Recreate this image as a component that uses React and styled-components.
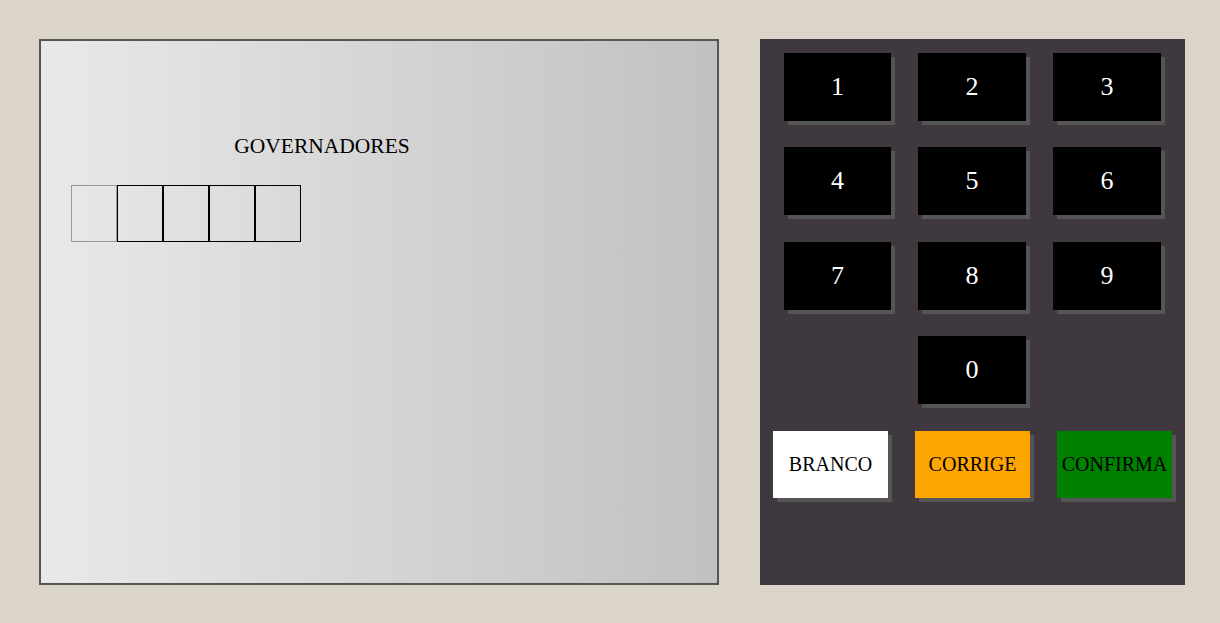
import React from 'react'
import styled, { createGlobalStyle } from 'styled-components'

const GlobalStyle = createGlobalStyle`
  html, body {
    margin: 0;
    padding: 0;
    background-color: #dbd4c9;
    font-family: "Liberation Serif", "Times New Roman", serif;
  }
`;

const Page = styled.div`
  display: flex;
  gap: 41px;
  padding: 39px 0 0 39px;
  height: 623px;
  box-sizing: border-box;
`;

const Screen = styled.div`
  width: 680px;
  height: 546px;
  box-sizing: border-box;
  border: 2px solid #555;
  background: linear-gradient(to right, #e9e9e9, #c1c1c1);
  padding: 0 0 0 30px;
`;

const Info = styled.div`
  width: 502px;
  display: flex;
  flex-direction: column;
`;

const Title = styled.div`
  margin-top: 93px;
  text-align: center;
  font-size: 21.5px;
  line-height: 24px;
  color: #000;
`;

const Digits = styled.div`
  display: flex;
  margin-top: 27px;
`;

const DigitBox = styled.div`
  width: 46px;
  height: 57px;
  box-sizing: border-box;
  border: 1px solid ${p => (p.$active ? '#999' : '#000')};
`;

const Keypad = styled.div`
  width: 425px;
  height: 546px;
  box-sizing: border-box;
  background-color: #3f393f;
  padding-top: 14px;
`;

const NumberGrid = styled.div`
  display: grid;
  grid-template-columns: 107px 108px 108px;
  grid-auto-rows: 68px;
  column-gap: 27px;
  row-gap: 26.33px;
  margin-left: 24px;
`;

const Key = styled.button`
  border: none;
  border-radius: 0;
  margin: 0;
  padding: 0;
  background-color: #000;
  color: #fff;
  font-family: "Liberation Serif", "Times New Roman", serif;
  font-size: 26px;
  box-shadow: 4px 4px 0 #555;
  grid-column: ${p => p.$col || 'auto'};
  cursor: pointer;
`;

const ActionRow = styled.div`
  display: flex;
  gap: 27px;
  padding: 0 13px;
  margin-top: 27px;
`;

const Action = styled.button`
  width: 115px;
  height: 67px;
  border: none;
  border-radius: 0;
  margin: 0;
  padding: 0;
  background-color: ${p => p.$bg};
  color: #000;
  font-family: "Liberation Serif", "Times New Roman", serif;
  font-size: 20px;
  box-shadow: 4px 4px 0 #555;
  cursor: pointer;
`;

const numbers = ['1', '2', '3', '4', '5', '6', '7', '8', '9'];

export default function App() {
  return (
    <>
      <GlobalStyle />
      <Page>
        <Screen>
          <Info>
            <Title>GOVERNADORES</Title>
            <Digits>
              {[0, 1, 2, 3, 4].map(i => (
                <DigitBox key={i} $active={i === 0} />
              ))}
            </Digits>
          </Info>
        </Screen>
        <Keypad>
          <NumberGrid>
            {numbers.map(n => (
              <Key key={n}>{n}</Key>
            ))}
            <Key $col="2">0</Key>
          </NumberGrid>
          <ActionRow>
            <Action $bg="#ffffff">BRANCO</Action>
            <Action $bg="#ffa500">CORRIGE</Action>
            <Action $bg="#008000">CONFIRMA</Action>
          </ActionRow>
        </Keypad>
      </Page>
    </>
  )
}
